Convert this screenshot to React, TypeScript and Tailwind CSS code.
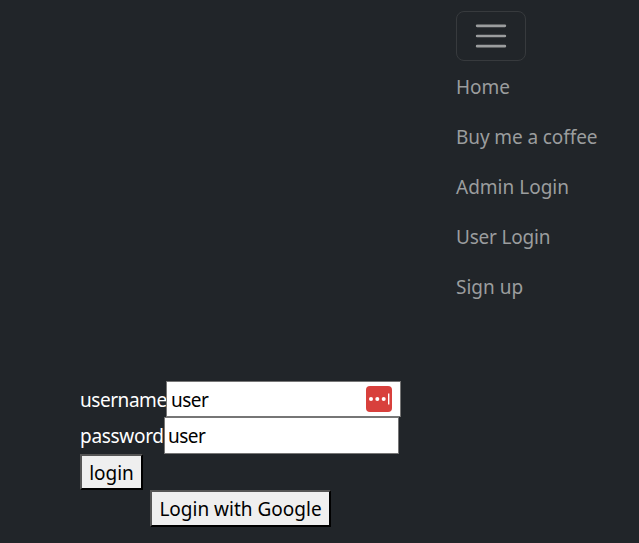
import React from "react";

const links = [
  { label: "Home", track: "tracking-[-0.05px]" },
  { label: "Buy me a coffee", track: "tracking-[-0.1px]" },
  { label: "Admin Login", track: "tracking-[0px]" },
  { label: "User Login", track: "tracking-[-0.2px]" },
  { label: "Sign up", track: "tracking-[0px]" },
];

function Navbar() {
  return (
    <nav className="ml-[456px] flex flex-col items-start pt-[11px]">
      <button
        aria-label="Toggle navigation"
        className="flex h-[50px] w-[70px] items-center justify-center rounded-[8px] border border-[#373a3d]"
      >
        <svg width="38" height="38" viewBox="0 0 30 30" fill="none">
          <path
            d="M4 7h22M4 15h22M4 23h22"
            stroke="#9b9d9e"
            strokeWidth="2"
            strokeLinecap="round"
            strokeMiterlimit="10"
          />
        </svg>
      </button>
      <ul>
        {links.map((l) => (
          <li key={l.label} className="flex h-[50px] items-center pt-[2px] text-[#9b9d9e]">
            <a className={`whitespace-nowrap ${l.track}`}>{l.label}</a>
          </li>
        ))}
      </ul>
    </nav>
  );
}

function PasswordManagerIcon() {
  return (
    <svg width="28" height="28" viewBox="0 0 28 28" className="mr-[7px]">
      <rect x="1" y="1" width="26" height="26" rx="4" fill="#d8403c" />
      <circle cx="6" cy="14" r="2" fill="#fff" />
      <circle cx="12.3" cy="14" r="2" fill="#fff" />
      <circle cx="18.7" cy="14" r="2" fill="#fff" />
      <rect x="23" y="8.5" width="1.4" height="11" fill="#fff" />
    </svg>
  );
}

export default function App() {
  return (
    <div className="h-[543px] w-[639px] overflow-hidden bg-[#212529] font-['Noto_Sans','Open_Sans',sans-serif] text-[19px] leading-[30px] text-white">
      <Navbar />
      <form className="ml-[80px] mt-[70px] flex flex-col items-start">
        <div className="flex h-[36px]">
          <label className="flex w-[86px] items-center whitespace-nowrap pt-[2px] tracking-[-0.45px]">username</label>
          <div className="flex h-[36px] w-[235px] items-center justify-between border border-[#767676] bg-white pl-[4px] text-black">
            <span className="pt-[2px] tracking-[-0.5px]">user</span>
            <PasswordManagerIcon />
          </div>
        </div>
        <div className="flex h-[37px]">
          <label className="flex w-[84px] items-center whitespace-nowrap tracking-[-0.3px]">password</label>
          <div className="flex h-[37px] w-[235px] items-center border border-[#767676] bg-white pl-[3px] text-black">
            <span className="tracking-[-0.5px]">user</span>
          </div>
        </div>
        <button
          type="button"
          className="flex h-[36px] w-[63px] items-center justify-center border-2 border-b-black border-l-[#555] border-r-black border-t-[#555] bg-[#efefef] text-black"
        >
          <span className="pt-[2px]">login</span>
        </button>
        <button
          type="button"
          className="ml-[70px] flex h-[37px] w-[181px] items-center justify-center whitespace-nowrap border-2 border-b-black border-l-[#555] border-r-black border-t-[#555] bg-[#efefef] text-black"
        >
          <span>Login with Google</span>
        </button>
      </form>
    </div>
  );
}
